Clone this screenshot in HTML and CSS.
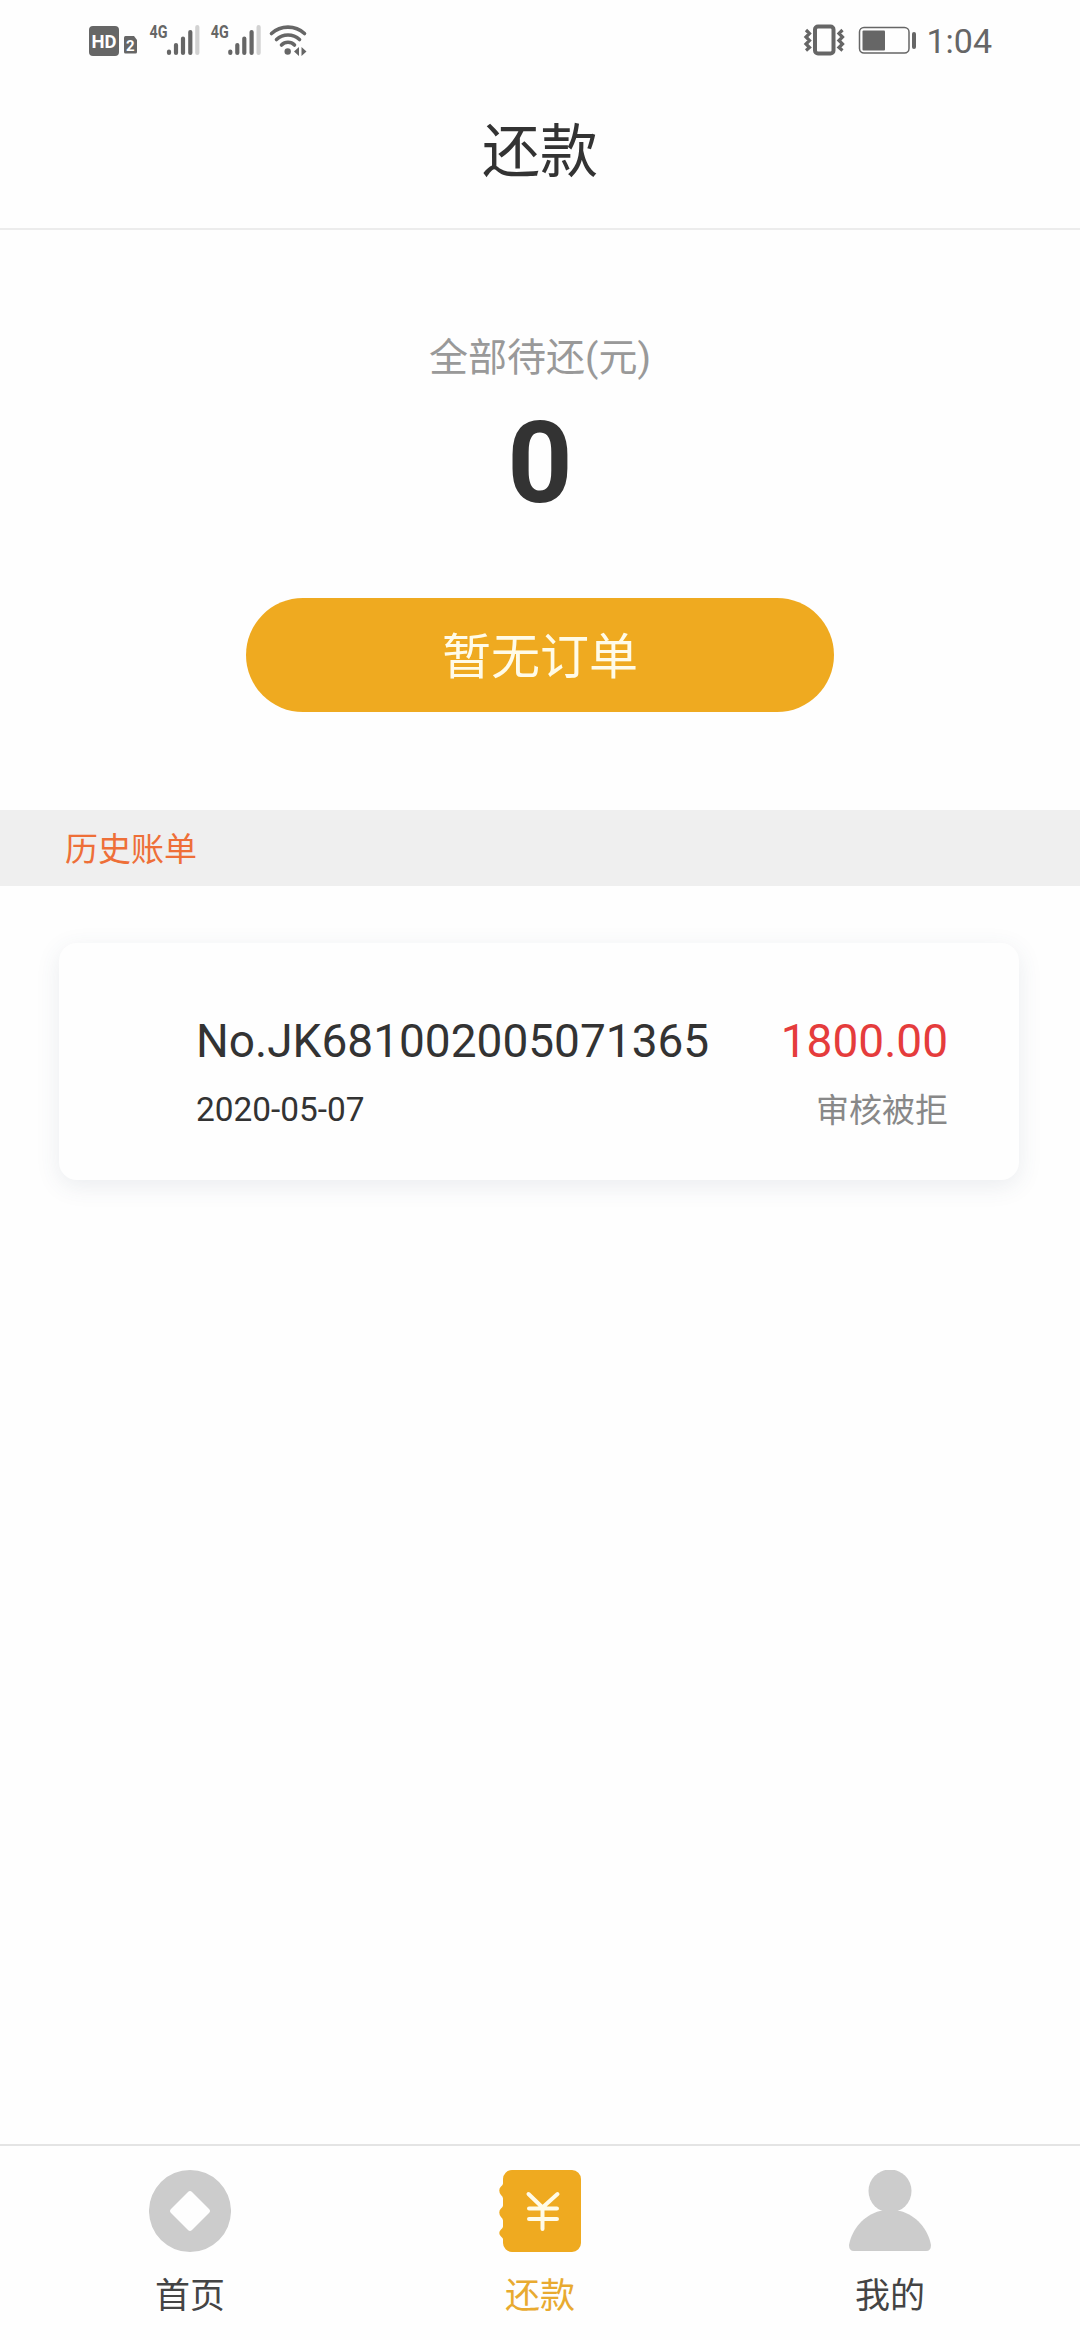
FILE: index.html
```html
<!DOCTYPE html>
<html lang="zh-CN">
<head>
  <meta charset="UTF-8" />
  <title>还款</title>
  <link rel="stylesheet" href="styles.css">
</head>
<body>
  <div class="status-bar">
    <svg class="status-left" width="260" height="60" viewBox="0 0 260 60">
      <rect x="19" y="16" width="30" height="30" rx="4" fill="#666"/>
      <text x="21.500" y="37.500" font-size="19" font-weight="700" fill="#fff" textLength="25" lengthAdjust="spacingAndGlyphs">HD</text>
      <path d="M56 26h8l3 4v12a1.500 1.500 0 0 1-1.500 1.500h-10a1.500 1.500 0 0 1-1.500-1.500V27.500a1.500 1.500 0 0 1 1.500-1.500z" fill="#666"/>
      <text x="56" y="40.500" font-size="15" font-weight="700" fill="#fff">2</text>
      <g id="signal">
        <text x="79.500" y="28" font-size="18" font-weight="700" fill="#666" textLength="18" lengthAdjust="spacingAndGlyphs">4G</text>
        <g stroke="#666" stroke-width="4.200" stroke-linecap="round">
          <path d="M99 41.500v1.500M106 35v8M113 28.500v14.500M120.300 22v21"/>
          <path d="M127.300 17v26" stroke="#d2d2d2"/>
        </g>
      </g>
      <use href="#signal" x="61.300"/>
      <g fill="none" stroke="#666" stroke-width="3.600" stroke-linecap="round">
        <path d="M201.500 23.500a24.500 24.500 0 0 1 33 0"/>
        <path d="M206.500 29.500a17 17 0 0 1 23 0"/>
        <path d="M211.500 35a9 9 0 0 1 13 0"/>
      </g>
      <circle cx="217.700" cy="41.500" r="3.200" fill="#666"/>
      <path d="M229 37v9l-5-4.500zM231.500 37v9l5-4.500z" fill="#666"/>
    </svg>
    <div class="status-right">
      <svg width="113" height="60" viewBox="0 0 113 60">
        <g fill="none" stroke="#666">
          <rect x="12" y="16.500" width="18.500" height="27" rx="3" stroke-width="4"/>
          <path d="M3 20l3.500 3.500-3.500 3.500 3.500 3.500-3.500 3.500 3.500 3.500-3.500 3M39.500 20l-3.500 3.500 3.500 3.500-3.500 3.500 3.500 3.500-3.500 3.500 3.500 3" stroke-width="3.200"/>
          <rect x="56.500" y="17.500" width="49.500" height="25.500" rx="4.500" stroke-width="1.500"/>
        </g>
        <rect x="59.500" y="20.500" width="22.500" height="20" rx="1" fill="#666"/>
        <rect x="109" y="22" width="4" height="17" rx="2" fill="#666"/>
      </svg>
      <span class="clock">1:04</span>
    </div>
  </div>

  <header class="title">还款</header>

  <section class="summary">
    <div class="label">全部待还(元)</div>
    <div class="total">0</div>
    <button class="order-btn">暂无订单</button>
  </section>

  <div class="history-title">历史账单</div>

  <main class="history">
    <div class="bill">
      <div class="row">
        <span>No.JK681002005071365</span>
        <span class="amount">1800.00</span>
      </div>
      <div class="row small">
        <span class="date">2020-05-07</span>
        <span class="state">审核被拒</span>
      </div>
    </div>
  </main>

  <nav class="tabs">
    <div class="tab">
      <svg width="82" height="82" viewBox="0 0 82 82">
        <path fill="#ccc" fill-rule="evenodd" d="M41 0a41 41 0 1 1 0 82a41 41 0 1 1 0-82zM39 22L22 39q-2 2 0 4l17 17q2 2 4 0l17-17q2-2 0-4L43 22q-2-2-4 0z"/>
      </svg>
      <span>首页</span>
    </div>
    <div class="tab active">
      <svg width="82" height="82" viewBox="0 0 82 82">
        <path fill="#efaa20" d="M13 0h60a9 9 0 0 1 9 9v64a9 9 0 0 1-9 9H13a9 9 0 0 1-9-9v-4q0-1-2-2.500Q-1.500 63 2 59.500q2-1.500 2-3v-6q0-2-2-3.500Q-1.500 42 2 38.500q2-1.500 2-3v-7q0-2-2-3.500Q-1.500 20 2 16.500q2-1.500 2-3V9a9 9 0 0 1 9-9z"/>
        <path fill="none" stroke="#fffbe8" stroke-width="4" stroke-linecap="round" d="M29.500 24l14 13.500L58.500 24M43.500 38v21M30 38.500h28M30 49h28"/>
      </svg>
      <span>还款</span>
    </div>
    <div class="tab">
      <svg width="82" height="82" viewBox="0 1 82 82">
        <circle cx="41" cy="22" r="21.500" fill="#ccc"/>
        <path fill="#ccc" d="M31 42h20c16 4 28 18 31 34q0 6-5 6H5q-5 0-5-6C3 60 15 46 31 42z"/>
      </svg>
      <span>我的</span>
    </div>
  </nav>
</body>
</html>
```
FILE: styles.css
```css
* {
  box-sizing: border-box;
}
body {
  margin: 0;
  width: 1080px;
  height: 2340px;
  display: flex;
  flex-direction: column;
  background: #fefefe;
  color: #333;
  font-family: Roboto, "Noto Sans CJK SC", sans-serif;
}
svg {
  display: block;
}
.status-bar {
  height: 80px;
  padding: 10px 88px 10px 70px;
  display: flex;
  justify-content: space-between;
}
.status-left {
  font-family: Roboto, sans-serif;
}
.status-right {
  display: flex;
  gap: 10px;
}
.clock {
  font-size: 34px;
  line-height: 63px;
  color: #666;
}
.title {
  height: 150px;
  line-height: 144px;
  border-bottom: 2px solid #ececec;
  text-align: center;
  font-size: 58px;
}
.summary {
  height: 580px;
  padding-top: 98px;
  display: flex;
  flex-direction: column;
  align-items: center;
}
.label {
  font-size: 39px;
  line-height: 60px;
  color: #999;
}
.total {
  font-size: 114px;
  font-weight: 700;
  line-height: 150px;
}
.order-btn {
  width: 588px;
  height: 114px;
  margin-top: 60px;
  padding: 0 0 5px;
  border: none;
  border-radius: 57px;
  background: #efaa20;
  color: #fffbe8;
  font-family: inherit;
  font-size: 49px;
}
.history-title {
  height: 76px;
  line-height: 80px;
  padding-left: 65px;
  background: #efefef;
  color: #ee6f38;
  font-size: 33px;
}
.history {
  flex: 1;
  padding: 57px 61px 0 59px;
}
.bill {
  height: 237px;
  padding: 63px 71px 0 137px;
  border-radius: 18px;
  background: #fefefe;
  box-shadow: 0 6px 24px rgba(60, 80, 110, 0.1);
}
.row {
  display: flex;
  justify-content: space-between;
  font-size: 46px;
  line-height: 70px;
}
.small {
  font-size: 33px;
}
.date {
  font-size: 33.4px;
  line-height: 68px;
}
.amount {
  color: #e53c3c;
}
.state {
  color: #888;
}
.tabs {
  height: 196px;
  padding: 24px 15px 0;
  border-top: 2px solid #e4e4e4;
  display: flex;
}
.tab {
  flex: 1;
  display: flex;
  flex-direction: column;
  align-items: center;
  gap: 18px;
  font-size: 35px;
  line-height: 54px;
  color: #444;
}
.active {
  color: #e8aa30;
}
```
